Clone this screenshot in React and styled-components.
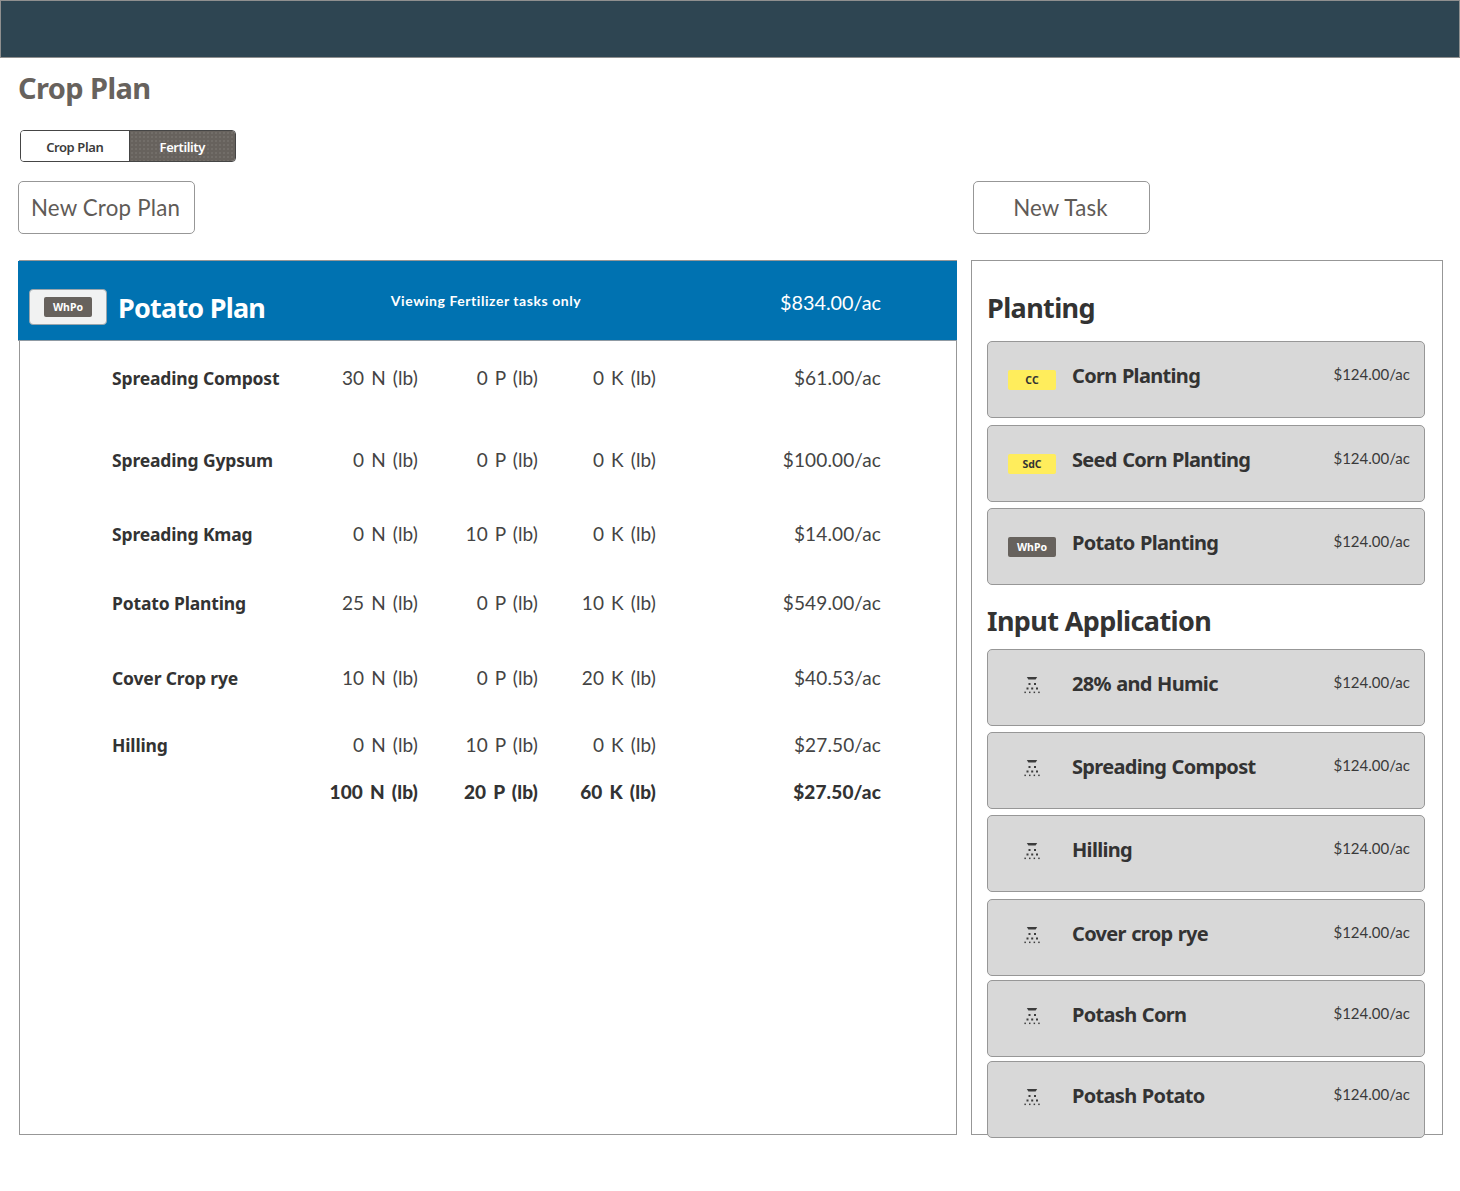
import React from "react";
import styled, { createGlobalStyle } from "styled-components";

const Global = createGlobalStyle`
  html, body { margin: 0; padding: 0; background: #fff; }
  body { font-family: "Lato", "Liberation Sans", sans-serif; color: #333; }
`;
const heavy = `"Noto Sans", "Liberation Sans", sans-serif`;

const Page = styled.div`width: 1460px; height: 1191px; overflow: hidden;`;
const TopBar = styled.header`
  height: 58px; box-sizing: border-box; background: #2e4552;
  border: 1px solid #8f8f8f;
`;
const Title = styled.h1`
  margin: 0; padding: 12px 0 0 18px; height: 36px;
  font: 700 29px/36px ${heavy}; color: #67625d; letter-spacing: -0.6px;
`;
const Tabs = styled.div`
  display: flex; width: 216px; height: 32px; margin: 24px 0 0 20px; box-sizing: border-box;
  border: 1px solid #454545; border-radius: 4px; overflow: hidden;
`;
const Tab = styled.div`
  flex: ${p => p.$w} 0 0; display: flex; align-items: center; justify-content: center;
  padding: 2px 1px 0 0; box-sizing: border-box;
  font: 600 13px/1 ${heavy}; letter-spacing: -0.4px;
  color: ${p => (p.$active ? "#fff" : "#3b3b3b")};
  background-color: ${p => (p.$active ? "#67625d" : "#fff")};
  background-image: ${p => (p.$active ? "radial-gradient(#7f7a75 0.6px, transparent 0.8px)" : "none")};
  background-size: 4px 4px;
  border-left: ${p => (p.$active ? "1px solid #454545" : "none")};
`;
const Actions = styled.div`display: flex; margin: 19px 0 0 18px;`;
const ActionSlot = styled.div`width: ${p => p.$w}px;`;
const Button = styled.button`
  width: 177px; height: 53px; padding: 1px 2px 0 0; background: #fff;
  border: 1px solid #979797; border-radius: 5px;
  font: 400 22.3px/1 "Lato", sans-serif; color: #5f5b57;
  letter-spacing: 0.2px;
`;
const Columns = styled.div`display: flex; margin: 26px 0 0 18px; gap: 14px;`;
const PlanPanel = styled.section`
  width: 938px; height: 875px; margin-left: 1px; box-sizing: border-box;
  border: 1px solid #979797;
`;
const PlanHead = styled.div`
  height: 80px; margin: 0 -1px 0 -2px; background: #0072b1; color: #fff;
  border-bottom: 1px solid #8f9aa3; box-sizing: border-box;
  display: grid; grid-template-columns: 112px 256px 200px 1fr;
`;
const BadgeHolder = styled.div`
  width: 78px; height: 36px; margin: 28px 0 0 11px; box-sizing: border-box;
  background: #f1f2f2; border: 1px solid #9aa5ac; border-radius: 4px;
  display: flex; align-items: center; justify-content: center;
`;
const PlanName = styled.div`
  margin: 28px 0 0 -12px;
  font: 700 27px/38px ${heavy}; letter-spacing: -0.78px; white-space: nowrap;
`;
const PlanNote = styled.div`
  margin: 29px 0 0 0; text-align: center; white-space: nowrap;
  font: 700 14px/22px "Lato", sans-serif; letter-spacing: 0.55px;
`;
const PlanCost = styled.div`
  margin: 28px 76px 0 0; text-align: right;
  font: 400 19.8px/26px "Lato", sans-serif;
`;
const Row = styled.div`
  height: ${p => p.$h}px; padding: ${p => p.$top || 0}px 0 0 92px;
  display: grid; grid-template-columns: 200px 106px 120px 118px 225px;
  font: ${p => (p.$total ? "900" : "400")} 19px/24px "Lato", sans-serif; color: #3a3a3a;
`;
const RowName = styled.div`
  font: 700 17.5px/24px ${heavy}; color: #333; letter-spacing: -0.15px; white-space: nowrap;
`;
const Num = styled.div`
  text-align: right; white-space: nowrap; letter-spacing: 0.12px;
  word-spacing: ${p => (p.$total ? "2.4px" : "2px")};
  color: ${p => (p.$total ? "#333" : "#444")};
`;
const TaskPanel = styled.aside`
  width: 472px; height: 875px; box-sizing: border-box; padding: 0 17px 0 15px;
  border: 1px solid #979797;
`;
const Section = styled.h2`
  margin: ${p => p.$top}px 0 ${p => p.$bottom}px; height: 38px;
  font: 700 27px/38px ${heavy}; color: #333; letter-spacing: -0.62px; white-space: nowrap;
`;
const Card = styled.div`
  width: 438px; height: 77px; box-sizing: border-box; margin-top: ${p => p.$gap}px;
  background: #d8d8d8; border: 1px solid #979797; border-radius: 5px;
  display: grid; grid-template-columns: 84px 1fr auto; padding: 0 14px 0 0;
`;
const IconCell = styled.div`
  display: flex; justify-content: center; align-items: flex-start;
  padding: ${p => p.$top}px 0 0 4px; box-sizing: border-box;
`;
const Badge = styled.span`
  width: 48px; height: 20px; border-radius: 2px; display: flex; align-items: center; justify-content: center;
  font: 700 10.5px/1 ${heavy}; letter-spacing: 0;
  background: ${p => (p.$kind === "yellow" ? "#ffed5c" : "#67625d")};
  color: ${p => (p.$kind === "yellow" ? "#333" : "#fff")};
`;
const CardName = styled.div`
  padding-top: 20px; font: 700 20px/28px ${heavy}; color: #333;
  letter-spacing: -0.68px; word-spacing: 0.8px; white-space: nowrap;
`;
const CardPrice = styled.div`
  padding-top: 21px; font: 400 15px/22px "Lato", sans-serif; color: #3a3a3a;
`;

const sprayDots = [
  [4.5, 6, 2], [10, 6, 2],
  [2.5, 10.5, 2], [7.2, 10.5, 2], [12, 10.5, 2],
  [0.4, 14.6, 1.5], [5, 14.6, 1.5], [9.6, 14.6, 1.5], [14.2, 14.6, 1.5],
];
const Spray = () => (
  <svg width="16" height="17" viewBox="0 0 16 17" fill="#3c3c3c" aria-hidden="true">
    <path d="M2.8 0h10.4l-1.6 2.6H4.4z" />
    {sprayDots.map(([x, y, s]) => (
      <rect key={`${x}-${y}`} x={x} y={y} width={s} height={s} />
    ))}
  </svg>
);

const rows = [
  ["Spreading Compost", "30 N (lb)", "0 P (lb)", "0 K (lb)", "$61.00/ac", 82],
  ["Spreading Gypsum", "0 N (lb)", "0 P (lb)", "0 K (lb)", "$100.00/ac", 74],
  ["Spreading Kmag", "0 N (lb)", "10 P (lb)", "0 K (lb)", "$14.00/ac", 69],
  ["Potato Planting", "25 N (lb)", "0 P (lb)", "10 K (lb)", "$549.00/ac", 75],
  ["Cover Crop rye", "10 N (lb)", "0 P (lb)", "20 K (lb)", "$40.53/ac", 67],
  ["Hilling", "0 N (lb)", "10 P (lb)", "0 K (lb)", "$27.50/ac", 47],
];
const planting = [
  ["CC", "yellow", "Corn Planting", 0],
  ["SdC", "yellow", "Seed Corn Planting", 7],
  ["WhPo", "dark", "Potato Planting", 6],
];
const inputs = [
  ["28% and Humic", 0],
  ["Spreading Compost", 6],
  ["Hilling", 6],
  ["Cover crop rye", 7],
  ["Potash Corn", 4],
  ["Potash Potato", 4],
];

export default function App() {
  return (
    <Page>
      <Global />
      <TopBar />
      <Title>Crop Plan</Title>
      <Tabs>
        <Tab $w={109}>Crop Plan</Tab>
        <Tab $w={105} $active>Fertility</Tab>
      </Tabs>
      <Actions>
        <ActionSlot $w={955}><Button>New Crop Plan</Button></ActionSlot>
        <ActionSlot $w={177}><Button>New Task</Button></ActionSlot>
      </Actions>
      <Columns>
        <PlanPanel>
          <PlanHead>
            <BadgeHolder><Badge $kind="dark">WhPo</Badge></BadgeHolder>
            <PlanName>Potato Plan</PlanName>
            <PlanNote>Viewing Fertilizer tasks only</PlanNote>
            <PlanCost>$834.00/ac</PlanCost>
          </PlanHead>
          {rows.map(([name, n, p, k, cost, h]) => (
            <Row key={name} $h={h - 25} $top={25}>
              <RowName>{name}</RowName>
              <Num>{n}</Num><Num>{p}</Num><Num>{k}</Num><Num>{cost}</Num>
            </Row>
          ))}
          <Row $h={24} $top={25} $total>
            <div />
            <Num $total>100 N (lb)</Num><Num $total>20 P (lb)</Num><Num $total>60 K (lb)</Num><Num $total>$27.50/ac</Num>
          </Row>
        </PlanPanel>
        <TaskPanel>
          <Section $top={28} $bottom={14}>Planting</Section>
          {planting.map(([code, kind, name, gap]) => (
            <Card key={name} $gap={gap}>
              <IconCell $top={28}><Badge $kind={kind}>{code}</Badge></IconCell>
              <CardName>{name}</CardName>
              <CardPrice>$124.00/ac</CardPrice>
            </Card>
          ))}
          <Section $top={17} $bottom={9}>Input Application</Section>
          {inputs.map(([name, gap]) => (
            <Card key={name} $gap={gap}>
              <IconCell $top={27}><Spray /></IconCell>
              <CardName>{name}</CardName>
              <CardPrice>$124.00/ac</CardPrice>
            </Card>
          ))}
        </TaskPanel>
      </Columns>
    </Page>
  );
}
